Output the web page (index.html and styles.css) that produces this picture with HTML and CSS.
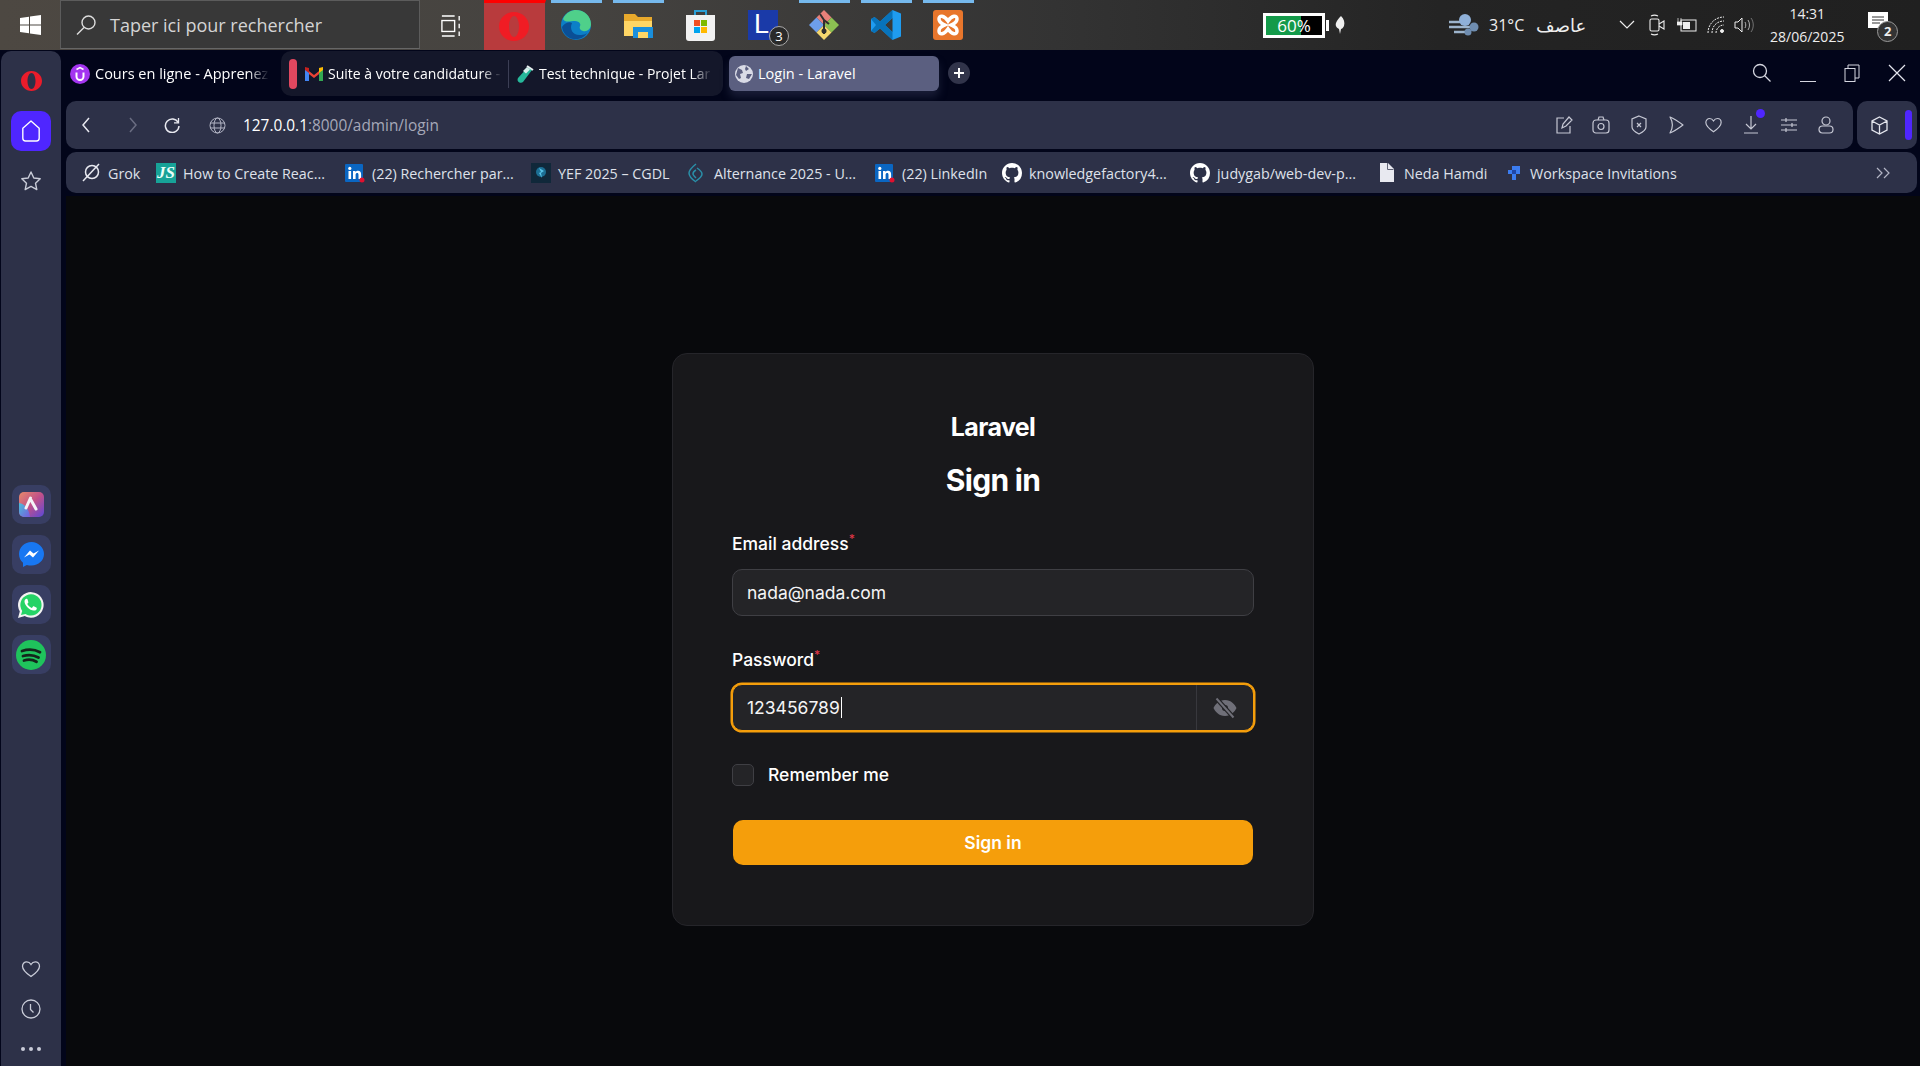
FILE: index.html
```html
<!DOCTYPE html>
<html lang="en">
  <head>
    <meta charset="UTF-8" />
    <meta name="viewport" content="width=device-width, initial-scale=1.0" />
    <title>Login - Laravel</title>
    <link rel="stylesheet" href="styles.css">
  </head>
  <body>
    <svg class="defs" width="0" height="0">
      <symbol id="github" viewBox="0 0 16 16"><path fill="#fff" d="M8 0C3.58 0 0 3.58 0 8c0 3.54 2.29 6.53 5.47 7.59.4.07.55-.17.55-.38 0-.19-.01-.82-.01-1.49-2.01.37-2.53-.49-2.69-.94-.09-.23-.48-.94-.82-1.13-.28-.15-.68-.52-.01-.53.63-.01 1.08.58 1.23.82.72 1.21 1.87.87 2.33.66.07-.52.28-.87.51-1.07-1.78-.2-3.64-.89-3.64-3.95 0-.87.31-1.59.82-2.15-.08-.2-.36-1.02.08-2.12 0 0 .67-.21 2.2.82.64-.18 1.32-.27 2-.27.68 0 1.36.09 2 .27 1.53-1.04 2.2-.82 2.2-.82.44 1.1.16 1.92.08 2.12.51.56.82 1.27.82 2.15 0 3.07-1.87 3.75-3.65 3.95.29.25.54.73.54 1.48 0 1.07-.01 1.93-.01 2.2 0 .21.15.46.55.38A8.013 8.013 0 0016 8c0-4.42-3.58-8-8-8z"/></symbol>
      <symbol id="linkedin" viewBox="0 0 20 20"><rect width="18" height="18" y="1" rx="1" fill="#0a66c2"/><rect x="3.5" y="8" width="2.6" height="8" fill="#fff"/><circle cx="4.8" cy="5.4" r="1.6" fill="#fff"/><path fill="#fff" d="M8 8h2.5v1.2c.6-.9 1.5-1.4 2.6-1.4 2 0 3 1.3 3 3.5V16h-2.6v-4.2c0-1.2-.4-1.8-1.3-1.8s-1.6.6-1.6 1.8V16H8z"/><circle cx="17" cy="17" r="2.5" fill="#e0102f"/></symbol>
      <symbol id="heart" viewBox="0 0 20 20"><path fill="none" stroke="currentColor" stroke-width="1.3" d="M10 17.5C5 14 1.5 11 1.5 7.2 1.500 4.500 3.500 2.800 5.700 2.800c1.800 0 3.300 1 4.300 2.700 1-1.700 2.500-2.700 4.300-2.700 2.200 0 4.200 1.700 4.200 4.400 0 3.800-3.500 6.800-8.500 10.300z"/></symbol>
    </svg>

    <header class="taskbar">
      <div class="start">
        <svg width="21" height="20" viewBox="0 0 21 20"><path fill="#fff" d="M0 3l9-1.300V9.500H0zM10 1.500L21 0v9.500H10zM0 10.500h9v7.800L0 17zM10 10.500h11V20l-11-1.500z"/></svg>
      </div>
      <div class="search">
        <svg width="22" height="22" viewBox="0 0 22 22"><circle cx="13.500" cy="8.500" r="6.500" fill="none" stroke="#ddd" stroke-width="1.400"/><path d="M9 13.500L2 20.500" stroke="#ddd" stroke-width="1.500"/></svg>
        <span>Taper ici pour rechercher</span>
      </div>
      <div class="taskview">
        <svg width="20" height="22" viewBox="0 0 22 24" fill="none" stroke="#fff" stroke-width="1.500"><path d="M1 1h14M1 23h14"/><rect x="1" y="6" width="14" height="12"/><path d="M20 1v5M20 9.500v5M20 18v5"/></svg>
      </div>
      <div class="apps">
        <div class="app app-hot">
          <svg width="30" height="29" viewBox="0 0 30 29"><path fill="#f01c24" fill-rule="evenodd" d="M15 0c8.300 0 15 6.500 15 14.500S23.300 29 15 29 0 22.500 0 14.500 6.700 0 15 0zm0 4c-2.800 0-5 4.500-5 10.500S12.200 25 15 25s5-4.500 5-10.500S17.800 4 15 4z"/></svg>
        </div>
        <div class="app app-open">
          <svg width="32" height="32" viewBox="0 0 32 32"><circle cx="16" cy="16" r="15" fill="#0c7fc7"/><path fill="#4fd08a" d="M3 10C6 3 12 1 16 1c8 0 15 6 15 14 0 5-4 8-8 7-3-.6-4-3-3-5 1-1 0-5-5-5-5 0-10 2-12-2z"/><path fill="#0a4f96" d="M12 14c-3 6 1 13 9 12 2 0 5-1 6-2-3 5-9 7-14 6C8 29 3 25 2 18c2-3 6-6 10-4z"/></svg>
        </div>
        <div class="app app-open">
          <svg width="30" height="26" viewBox="0 0 30 26"><path fill="#e8a92c" d="M1 2h11l3 3h14v19H1z"/><path fill="#ffd665" d="M1 9h28v15H1z"/><rect x="10" y="15" width="20" height="11" fill="#1a8fdc"/><rect x="15" y="20" width="10" height="6" fill="#ffd665"/></svg>
        </div>
        <div class="app">
          <svg width="29" height="32" viewBox="0 0 29 32"><path fill="none" stroke="#2a9fd6" stroke-width="2" d="M9 7V2h11v5"/><path fill="#f2f2f2" d="M0 6h29v23a3 3 0 01-3 3H3a3 3 0 01-3-3z"/><rect x="8" y="11" width="6" height="6" fill="#f25022"/><rect x="15" y="11" width="6" height="6" fill="#7fba00"/><rect x="8" y="18" width="6" height="6" fill="#00a4ef"/><rect x="15" y="18" width="6" height="6" fill="#ffb900"/></svg>
        </div>
        <div class="app">
          <div class="lapp"><span>L</span><b>3</b></div>
        </div>
        <div class="app app-open">
          <svg width="30" height="30" viewBox="0 0 30 30"><path fill="#e8807a" d="M15 0l7.500 7.500L15 15 7.500 7.500z"/><path fill="#6d9eeb" d="M7.500 7.500L15 15l-7.500 7.500L0 15z"/><path fill="#8cc152" d="M22.500 7.500L30 15l-7.500 7.500L15 15z"/><path fill="#f5d76e" d="M15 15l7.500 7.500L15 30l-7.500-7.500z"/><path d="M11 4l4 6v10M15 10l5 4M15 20v4" stroke="#2f2f2f" stroke-width="2" fill="none"/><circle cx="15" cy="21" r="2.500" fill="#2f2f2f"/></svg>
        </div>
        <div class="app app-open">
          <svg width="30" height="30" viewBox="0 0 30 30"><path fill="#1f9cf0" d="M21.500 0L30 3.500v23L21.500 30 9 18.500 3.500 23 0 21V9l3.500-2L9 11.500zm0 8L14 15l7.500 7z"/><path fill="#0065a9" d="M0 9l3.500-2L9 11.500 21.500 0v8L14 15l7.500 7v8L9 18.500 3.500 23 0 21l5-6z" opacity=".75"/></svg>
        </div>
        <div class="app app-open">
          <svg width="30" height="30" viewBox="0 0 30 30"><rect width="30" height="30" rx="3" fill="#e8762c"/><path fill="none" stroke="#fff" stroke-width="3.500" d="M6 9c0-4 5-4 9 2 4-6 9-6 9-2s-4 5-6 6c2 1 6 2 6 6s-5 4-9-2c-4 6-9 6-9 2s4-5 6-6c-2-1-6-2-6-6z"/></svg>
        </div>
      </div>
      <div class="tray">
        <div class="battery"><span>60%</span></div>
        <svg class="feather" width="10" height="18" viewBox="0 0 10 18"><path fill="#eee" d="M6 0c3 3 4 6 3 10-1 2-2 3-3 3l-1 5-1-5C2 12 0 10 1 7c1-3 3-5 5-7z"/></svg>
        <svg class="wind" width="30" height="22" viewBox="0 0 30 22"><path d="M0 8h18M0 13h22M5 18h14" stroke="#9db4cc" stroke-width="2.500"/><circle cx="16" cy="6" r="6" fill="#8fb0d8"/><circle cx="25" cy="13" r="4.500" fill="#6f8db0"/><circle cx="19" cy="18" r="3.500" fill="#6f8db0"/></svg>
        <span class="temp">31°C</span>
        <span class="weather" lang="ar" dir="rtl">عاصف</span>
        <svg class="chev" width="16" height="10" viewBox="0 0 16 10"><path d="M1 1l7 7 7-7" fill="none" stroke="#eee" stroke-width="1.200"/></svg>
        <svg class="meet" width="16" height="22" viewBox="0 0 16 22" fill="none" stroke="#eee" stroke-width="1.100"><rect x="1" y="5" width="9" height="12" rx="1.500"/><path d="M10 10l5-3v8l-5-3M2 2c2-1 5-1 7 0M2 20c2 1 5 1 7 0"/></svg>
        <svg class="plug" width="20" height="14" viewBox="0 0 20 14"><rect x="4" y="2" width="15" height="11" fill="none" stroke="#eee"/><rect x="6" y="4" width="7" height="7" fill="#eee"/><path d="M1 0v4M4 0v4M0 4h5v3H0z" fill="#eee" stroke="#eee" stroke-width=".7"/></svg>
        <svg class="wifi" width="18" height="18" viewBox="0 0 18 18" fill="none" stroke="#eee" stroke-width="1"><path d="M1 17C1 8 8 1 17 1M5 17c0-7 5-12 12-12M9 17c0-4 3-8 8-8" stroke-dasharray="2 1"/><circle cx="15" cy="15" r="1.500" fill="#eee"/></svg>
        <svg class="vol" width="20" height="18" viewBox="0 0 20 18" fill="none" stroke="#eee" stroke-width="1"><path d="M1 6h3l4-4v14l-4-4H1z"/><path d="M11 6c1 2 1 4 0 6M14 4c2 3 2 7 0 10" opacity=".7"/><path d="M17 2c3 4 3 10 0 14" opacity=".4"/></svg>
        <div class="clock"><span>14:31</span><span>28/06/2025</span></div>
        <div class="notif">
          <svg width="20" height="20" viewBox="0 0 20 20"><path fill="#fff" d="M0 0h20v16H0z"/><path d="M4 5h12M4 8h12M4 11h8" stroke="#333" stroke-width="1"/></svg>
          <b>2</b>
        </div>
      </div>
    </header>

    <div class="browser">
      <aside class="sidebar">
        <div class="side-top">
          <svg width="21" height="20" viewBox="0 0 21 20"><path fill="#ea1c2b" fill-rule="evenodd" d="M10.500 0C16.300 0 21 4.500 21 10s-4.700 10-10.500 10S0 15.500 0 10 4.700 0 10.500 0zm0 2C8.300 2 6.500 5.500 6.500 10s1.800 8 4 8 4-3.500 4-8-1.800-8-4-8z"/></svg>
          <div class="home">
            <svg width="20" height="24" viewBox="0 0 22 26"><path fill="none" stroke="#fff" stroke-width="1.500" d="M11 2L2 10v11c0 2 1 3 3 3h12c2 0 3-1 3-3V10z" stroke-linejoin="round"/></svg>
          </div>
          <svg class="star" width="22" height="22" viewBox="0 0 22 22"><path fill="none" stroke="#c9ccd8" stroke-width="1.400" stroke-linejoin="round" d="M11 2l2.800 6 6.400.8-4.700 4.400 1.300 6.400L11 16.400 5.200 19.600l1.300-6.400L1.800 8.800 8.200 8z"/></svg>
        </div>
        <div class="side-apps">
          <div class="side-app">
            <svg width="25" height="25" viewBox="0 0 25 25"><defs><linearGradient id="aria" x1="0" y1="0" x2="1" y2="1"><stop offset="0" stop-color="#e88a6a"/><stop offset=".5" stop-color="#c0508a"/><stop offset="1" stop-color="#5a48d8"/></linearGradient><linearGradient id="ariab" x1="0" y1="0" x2="1" y2="1"><stop offset="0" stop-color="#49c0d8"/><stop offset="1" stop-color="#7a5ae0"/></linearGradient></defs><rect width="25" height="25" rx="5" fill="url(#aria)"/><path d="M0 11c6 1 10 6 11 14H5a5 5 0 01-5-5z" fill="url(#ariab)"/><path d="M11.500 6L7 16M12 8l5 9" stroke="#f4f4f8" stroke-width="3" stroke-linecap="round"/></svg>
          </div>
          <div class="side-app">
            <svg width="25" height="25" viewBox="0 0 25 25"><path fill="#1877f2" d="M12.500 0C5.500 0 0 5.200 0 12c0 3.600 1.500 6.700 4 8.800V25l3.800-2.100c1.500.4 3 .6 4.700.6 7 0 12.500-5.200 12.500-11.500S19.500 0 12.500 0z"/><path fill="#fff" d="M5 15.500l6-7 3.500 3L20 8.500l-6 7-3.500-3z"/></svg>
          </div>
          <div class="side-app">
            <svg width="26" height="26" viewBox="0 0 26 26"><path fill="#f2f2f2" d="M0 26l1.800-6.600A12.800 12.800 0 1113 25.700c-2.200 0-4.300-.6-6.200-1.600z"/><path fill="#25d366" d="M3 23l1.200-4.100A10.600 10.600 0 1113 23.500c-1.900 0-3.800-.5-5.400-1.500z"/><path fill="#fff" d="M9.500 7.300c-.3-.6-.5-.6-1-.6-.8 0-2 .9-2 2.900 0 3.800 5.300 9 9.300 9 2 0 3-1.300 3-2.200 0-.5-.2-.7-.6-.9l-2.400-1.200c-.4-.2-.6 0-.8.300l-.9 1.100c-.3.300-.5.300-.9.100-1.500-.7-3-2-3.800-3.500-.2-.4 0-.6.200-.8l.6-.8c.2-.3.200-.5.100-.8z"/></svg>
          </div>
          <div class="side-app">
            <svg width="30" height="30" viewBox="0 0 30 30"><circle cx="15" cy="15" r="15" fill="#1fc35c"/><path d="M6 11c6-2 13-1.500 18 1.200M7 16c5-1.500 11-1 15.500 1.500M8 20.500c4-1.200 9-.8 12.500 1.200" fill="none" stroke="#14251c" stroke-width="2.800" stroke-linecap="round"/></svg>
          </div>
        </div>
        <div class="side-bottom">
          <svg class="line-icon" width="20" height="20"><use href="#heart"/></svg>
          <svg class="line-icon" width="20" height="20" viewBox="0 0 20 20" fill="none" stroke="currentColor" stroke-width="1.300"><circle cx="10" cy="10" r="9"/><path d="M9.500 5v5.500l3 3"/></svg>
          <div class="dots"><i></i><i></i><i></i></div>
        </div>
      </aside>

      <div class="main">
        <nav class="tabs">
          <div class="tab tab-first">
            <svg width="20" height="20" viewBox="0 0 20 20"><circle cx="10" cy="10" r="10" fill="#a435f0"/><path d="M6.500 8.500v4a3.500 3.500 0 007 0v-4" fill="none" stroke="#fff" stroke-width="2"/><path d="M6.500 5.500L10 3.500l3.500 2" fill="none" stroke="#fff" stroke-width="1.500"/></svg>
            <span class="tab-text">Cours en ligne - Apprenez</span>
          </div>
          <div class="tab-group">
            <i class="group-pill"></i>
            <div class="tab tab-mail">
              <svg width="18" height="15" viewBox="0 0 18 15"><path fill="#ea4335" d="M0 2l9 7 9-7v3L9 12 0 5z"/><path fill="#4285f4" d="M0 3v12h4V6z"/><path fill="#34a853" d="M18 3v12h-4V6z"/><path fill="#fbbc05" d="M14 2l4-1v3l-4 3z"/><path fill="#c5221f" d="M4 2L0 1v3l4 3z"/></svg>
              <span class="tab-text">Suite à votre candidature -</span>
            </div>
            <i class="group-sep"></i>
            <div class="tab tab-test">
              <svg width="18" height="20" viewBox="0 0 18 20"><path d="M2 14L12 3l4 3-9 12c-2 2-7 0-5-4z" fill="#26b89a"/><path d="M11 2l6 4" stroke="#e8eef0" stroke-width="2"/><path d="M7 7l4-4 3 2.500-4 4z" fill="#d8f0ec"/></svg>
              <span class="tab-text">Test technique - Projet Lar</span>
            </div>
          </div>
          <div class="tab tab-active">
            <svg width="18" height="18" viewBox="0 0 18 18"><circle cx="9" cy="9" r="9" fill="#d9dbe6"/><path d="M3 3l4 2 1 3-3 1 1 4-2 1-3-4zM11 1l3 3-3 2-1-2zM17 9l-3 5-3-1 1-4z" fill="#5b5f80"/></svg>
            <span>Login - Laravel</span>
          </div>
          <div class="tab-add"></div>
          <div class="win-controls">
            <svg width="20" height="20" viewBox="0 0 20 20" fill="none" stroke="#d5d7e0" stroke-width="1.300"><circle cx="8" cy="8" r="6.500"/><path d="M12.500 12.500l6 6"/></svg>
            <i class="win-min"></i>
            <svg width="16" height="18" viewBox="0 0 16 18" fill="none" stroke="#d5d7e0" stroke-width="1"><rect x="1" y="4.500" width="10" height="13"/><path d="M4 4.500V1h11v13h-4"/></svg>
            <svg width="18" height="18" viewBox="0 0 18 18" stroke="#e4e6ee" stroke-width="1.200"><path d="M1 1l16 16M17 1L1 17"/></svg>
          </div>
        </nav>

        <div class="toolbar">
          <div class="addressbar">
            <svg class="nav-back" width="10" height="16" viewBox="0 0 10 16"><path d="M8 1L2 8l6 7" fill="none" stroke="#e8e9f0" stroke-width="1.500"/></svg>
            <svg class="nav-fwd" width="10" height="16" viewBox="0 0 10 16"><path d="M2 1l6 7-6 7" fill="none" stroke="#6a6d82" stroke-width="1.500"/></svg>
            <svg class="nav-reload" width="16" height="16" viewBox="0 0 16 16" fill="none" stroke="#e8e9f0" stroke-width="1.500"><path d="M14.200 5.500A6.800 6.800 0 1015 9"/><path d="M14.500 1v4.800H10" stroke-width="1.300"/></svg>
            <svg class="nav-globe" width="17" height="17" viewBox="0 0 17 17" fill="none" stroke="#b4b6c6" stroke-width="1"><circle cx="8.500" cy="8.500" r="7.500"/><ellipse cx="8.500" cy="8.500" rx="3.500" ry="7.500"/><path d="M1 6h15M1 11h15"/></svg>
            <div class="url"><b>127.0.0.1</b>:8000/admin/login</div>
            <div class="tools">
              <svg width="18" height="20" viewBox="0 0 18 20" fill="none"><path d="M9 3H2v15h13v-7M7 13l1-4 6-7 3 3-6 6z"/></svg>
              <svg width="18" height="20" viewBox="0 0 18 20" fill="none"><rect x="1" y="5" width="16" height="13" rx="3"/><circle cx="9" cy="11.500" r="3"/><path d="M6 5l1-3h4l1 3"/></svg>
              <svg width="16" height="20" viewBox="0 0 16 20" fill="none"><path d="M8 1l7 3v8c0 3-3 5-7 7-4-2-7-4-7-7V4zM6 8l4 4M10 8l-4 4"/></svg>
              <svg width="16" height="18" viewBox="0 0 16 18" fill="none"><path d="M2 1c5 2 9 5 13 8-4 3-8 6-13 8 3-5 3-11 0-16z" stroke-linejoin="round"/></svg>
              <svg width="19" height="18" viewBox="0 0 20 20"><use href="#heart"/></svg>
              <div class="tool-dl">
                <svg width="16" height="20" viewBox="0 0 16 20" fill="none"><path d="M8 1v12M3 9l5 5 5-5M1 18h14"/></svg>
                <i></i>
              </div>
              <svg width="16" height="16" viewBox="0 0 16 16" fill="none"><path d="M0 3h16M0 8h16M0 13h16M5 1v4M11 6v4M5 11v4"/></svg>
              <svg width="16" height="20" viewBox="0 0 16 20" fill="none"><circle cx="8" cy="6" r="4"/><rect x="1" y="11" width="14" height="7" rx="3.500"/></svg>
            </div>
          </div>
          <div class="extbox">
            <svg width="17" height="19" viewBox="0 0 17 19" fill="none" stroke="#e4e6ee" stroke-width="1.300"><path d="M8.500 1L16 5v9l-7.500 4L1 14V5zM1 5l7.500 4L16 5M8.500 9v9"/></svg>
            <i></i>
          </div>
        </div>

        <div class="bookmarks">
          <div class="bm">
            <svg width="19" height="19" viewBox="0 0 19 19" fill="none" stroke="#e8e9f0" stroke-width="1.500"><circle cx="10" cy="9" r="6.500"/><path d="M1 18L17 1"/></svg>
            <span>Grok</span>
          </div>
          <div class="bm">
            <div class="bm-js">JS</div>
            <span>How to Create Reac...</span>
          </div>
          <div class="bm">
            <svg width="20" height="20"><use href="#linkedin"/></svg>
            <span>(22) Rechercher par...</span>
          </div>
          <div class="bm">
            <svg width="20" height="20" viewBox="0 0 20 20"><rect width="20" height="20" fill="#10283a"/><circle cx="10" cy="9" r="5" fill="#1c6f94"/><path d="M8 5l5 3-3 2 1 5-3-5 2-1z" fill="#58c4e8"/></svg>
            <span>YEF 2025 – CGDL</span>
          </div>
          <div class="bm bm-alt">
            <svg width="16" height="20" viewBox="0 0 16 20" fill="none" stroke="#2a8fa8" stroke-width="1.500"><path d="M8 1C3 5 1 8 1 10c0 3 4 7 7 9M9 5c3 2 5 4 5 6s-3 5-6 7M8 7c-2 1-3 3-3 4s2 3 3 4"/></svg>
            <span>Alternance 2025 - U...</span>
          </div>
          <div class="bm">
            <svg width="20" height="20"><use href="#linkedin"/></svg>
            <span>(22) LinkedIn</span>
          </div>
          <div class="bm">
            <svg width="20" height="20"><use href="#github"/></svg>
            <span>knowledgefactory4...</span>
          </div>
          <div class="bm">
            <svg width="20" height="20"><use href="#github"/></svg>
            <span>judygab/web-dev-p...</span>
          </div>
          <div class="bm bm-doc">
            <svg width="14" height="19" viewBox="0 0 14 19"><path fill="#e8e9f0" d="M0 0h8l6 6v13H0z"/><path fill="#2d3148" d="M8 0v6h6l-1 .7H7.300V0z"/></svg>
            <span>Neda Hamdi</span>
          </div>
          <div class="bm bm-work">
            <svg width="12" height="14" viewBox="0 0 12 14"><path fill="#3b7cf0" d="M4 0h8v8H8v6H4V8H0V4h4z"/><path fill="#1e46a8" d="M4 4h4v4H4z"/></svg>
            <span>Workspace Invitations</span>
          </div>
          <svg class="bm-more" width="14" height="12" viewBox="0 0 14 12" fill="none" stroke="#b4b6c6" stroke-width="1.200"><path d="M1 1l5 5-5 5M8 1l5 5-5 5"/></svg>
        </div>

        <main class="page">
          <section class="card">
            <div class="brand">Laravel</div>
            <h1 class="title">Sign in</h1>

            <label class="label label-first">Email address<sup>*</sup></label>
            <div class="field">
              <span class="field-text">nada@nada.com</span>
            </div>

            <label class="label">Password<sup>*</sup></label>
            <div class="field field-focus">
              <span class="field-text">123456789<i class="caret"></i></span>
              <div class="field-eye">
                <svg width="24" height="22" viewBox="0 0 24 22"><path fill="#6f6f78" fill-rule="evenodd" d="M12 3c6 0 10 4.500 11.500 8C22 14.500 18 19 12 19S2 14.500.5 11C2 7.500 6 3 12 3zm0 5a3 3 0 100 6 3 3 0 000-6z"/><path d="M3 1l18 20" stroke="#242427" stroke-width="4.500"/><path d="M3.500 1.500l17 19" stroke="#6f6f78" stroke-width="2"/></svg>
              </div>
            </div>

            <div class="remember">
              <i class="checkbox"></i>
              <span>Remember me</span>
            </div>

            <button class="submit">Sign in</button>
          </section>
        </main>
      </div>
    </div>
  </body>
</html>
```

FILE: styles.css
```css
* {
  box-sizing: border-box;
}
html,
body {
  margin: 0;
  height: 1066px;
  overflow: hidden;
}
body {
  background: #02051a;
  font-family: "Open Sans", "Noto Sans", sans-serif;
  color: #fff;
}
i {
  display: block;
}
.defs {
  position: absolute;
}

/* windows taskbar */
.taskbar {
  height: 50px;
  display: flex;
  align-items: center;
  background: linear-gradient(90deg, #4d4842 0, #454340 30%, #333 55%, #242424 75%, #202020 100%);
}
.start {
  width: 60px;
  display: flex;
  justify-content: center;
  padding-left: 1px;
}
.search {
  width: 360px;
  height: 49px;
  margin-top: -1px;
  display: flex;
  align-items: center;
  gap: 13px;
  padding-left: 14px;
  background: #383838;
  border: 1px solid #5c5c5c;
  border-bottom-color: #666;
  font-size: 18px;
  color: #d4d4d4;
}
.taskview {
  width: 62px;
  display: flex;
  justify-content: center;
  padding-top: 2px;
  margin-right: 2px;
}
.apps {
  display: flex;
  height: 50px;
}
.app {
  position: relative;
  width: 62px;
  display: flex;
  align-items: center;
  justify-content: center;
}
.app svg {
  position: relative;
  left: -1px;
}
.app-open::before {
  content: "";
  position: absolute;
  top: 0;
  left: 5px;
  right: 6px;
  height: 3px;
  background: #76b9ed;
}
.app-hot {
  width: 62px;
  background: #b83b3d;
  border-top: 3px solid #f00;
  border-right: 1px solid transparent;
  background-clip: padding-box;
}
.lapp {
  position: relative;
  width: 30px;
  height: 30px;
  background: #1a3aa8;
  padding-left: 6px;
  font-size: 27px;
  line-height: 29px;
  font-family: "Liberation Sans", sans-serif;
}
.lapp b {
  position: absolute;
  right: -11px;
  bottom: -6px;
  width: 20px;
  height: 20px;
  border-radius: 50%;
  background: #2a2a2a;
  border: 1px solid #aaa;
  font-size: 13px;
  line-height: 18px;
  font-weight: 400;
  text-align: center;
  font-family: "Open Sans", sans-serif;
}
.tray {
  margin-left: auto;
  display: flex;
  align-items: center;
  height: 50px;
  width: 657px;
  color: #eee;
  font-size: 16px;
}
.battery {
  position: relative;
  width: 62px;
  height: 25px;
  border: 3px solid #fff;
  background: linear-gradient(90deg, #149a4a 0, #149a4a 62%, #000 62%);
  text-align: center;
  font-size: 17px;
  line-height: 19px;
  color: #fff;
}
.battery::after {
  content: "";
  position: absolute;
  right: -7px;
  top: 4px;
  width: 3px;
  height: 11px;
  background: #fff;
}
.feather {
  margin-left: 10px;
}
.wind {
  margin-left: 104px;
}
.temp {
  margin-left: 10px;
}
.weather {
  margin-left: 12px;
  width: 50px;
  font-family: "DejaVu Sans", sans-serif;
  font-size: 18px;
  text-align: center;
}
.chev {
  margin-left: 33px;
}
.meet {
  margin-left: 14px;
}
.plug {
  margin-left: 12px;
}
.wifi {
  margin-left: 10px;
}
.vol {
  margin-left: 9px;
}
.clock {
  width: 100px;
  margin-left: 3px;
  display: flex;
  flex-direction: column;
  align-items: center;
  font-size: 14px;
  line-height: 23px;
}
.notif {
  position: relative;
  margin-left: 11px;
  margin-top: -6px;
}
.notif svg {
  display: block;
}
.notif b {
  position: absolute;
  left: 9px;
  top: 9px;
  width: 21px;
  height: 21px;
  border-radius: 50%;
  background: #333;
  border: 1px solid #999;
  font-size: 13px;
  line-height: 19px;
  text-align: center;
}

/* browser frame */
.browser {
  display: flex;
  height: 1016px;
}
.sidebar {
  width: 60px;
  margin-top: 1px;
  margin-left: 1px;
  display: flex;
  flex-direction: column;
  align-items: center;
  background: #2d3148;
  border-radius: 10px 10px 0 0;
}
.side-top {
  display: flex;
  flex-direction: column;
  align-items: center;
  padding-top: 20px;
}
.home {
  width: 40px;
  height: 40px;
  margin-top: 20px;
  display: flex;
  align-items: center;
  justify-content: center;
  background: #4f26ff;
  border-radius: 10px;
}
.star {
  margin-top: 19px;
}
.side-apps {
  margin-top: 293px;
  display: flex;
  flex-direction: column;
  gap: 11px;
}
.side-app {
  width: 39px;
  height: 39px;
  display: flex;
  align-items: center;
  justify-content: center;
  background: #383e63;
  border-radius: 10px;
}
.side-bottom {
  margin-top: auto;
  padding-bottom: 7px;
  display: flex;
  flex-direction: column;
  align-items: center;
  gap: 20px;
  color: #c9ccd8;
}
.line-icon {
  display: block;
}
.dots {
  display: flex;
  gap: 4px;
  height: 20px;
  align-items: center;
}
.dots i {
  width: 4px;
  height: 4px;
  border-radius: 50%;
  background: #c9ccd8;
}

.main {
  flex: 1;
  min-width: 0;
  display: flex;
  flex-direction: column;
}

/* tabs */
.tabs {
  height: 51px;
  display: flex;
  align-items: flex-start;
  padding-left: 9px;
  font-size: 14.5px;
  line-height: 20px;
}
.tab {
  display: flex;
  align-items: center;
  gap: 5px;
  height: 35px;
  margin-top: 6px;
  white-space: nowrap;
  overflow: hidden;
}
.tab-text {
  display: block;
  overflow: hidden;
  flex: 1;
  -webkit-mask-image: linear-gradient(90deg, #000 88%, transparent);
  mask-image: linear-gradient(90deg, #000 88%, transparent);
}
.tab-first {
  width: 199px;
  margin-right: 12px;
}
.tab-group {
  width: 442px;
  height: 45px;
  margin-top: 1px;
  display: flex;
  align-items: center;
  background: #14172a;
  border-radius: 10px;
  padding-left: 8px;
  font-size: 14px;
}
.group-pill {
  width: 8px;
  height: 30px;
  border-radius: 4px;
  background: #e0475f;
  margin-right: 8px;
}
.tab-mail {
  width: 197px;
  margin-top: 0;
}
.group-sep {
  width: 1px;
  height: 28px;
  background: #3c3f55;
  margin: 0 7px 0 6px;
}
.tab-test {
  width: 196px;
  margin-top: 0;
}
.tab-active {
  width: 210px;
  margin-left: 6px;
  padding-left: 6px;
  background: #5b5f80;
  border-radius: 6px;
  box-shadow: 0 6px 8px rgba(70, 74, 110, 0.35);
}
.tab-add {
  position: relative;
  width: 22px;
  height: 22px;
  margin: 12px 0 0 9px;
  border-radius: 50%;
  background: #31344a;
}
.tab-add::before,
.tab-add::after {
  content: "";
  position: absolute;
  background: #fff;
  left: 6px;
  top: 10px;
  width: 10px;
  height: 2px;
}
.tab-add::after {
  left: 10px;
  top: 6px;
  width: 2px;
  height: 10px;
}
.win-controls {
  margin-left: auto;
  height: 46px;
  display: flex;
  align-items: center;
  gap: 28px;
  padding-right: 14px;
}
.win-min {
  width: 16px;
  height: 1px;
  margin-top: 16px;
  background: #d5d7e0;
}

/* address bar */
.toolbar {
  display: flex;
  gap: 4px;
  margin-left: 5px;
  height: 48px;
  margin-right: 3px;
}
.addressbar {
  flex: 1;
  display: flex;
  align-items: center;
  background: #2d3148;
  border-radius: 10px;
  padding-left: 15px;
}
.nav-fwd {
  margin-left: 37px;
}
.nav-reload {
  margin-left: 26px;
}
.nav-globe {
  margin-left: 29px;
}
.url {
  margin-left: 17px;
  font-size: 15.4px;
  color: #a6a8b8;
}
.url b {
  font-weight: 400;
  color: #fff;
}
.tools {
  margin-left: auto;
  padding-right: 8px;
  display: grid;
  grid-auto-flow: column;
  grid-auto-columns: 37.5px;
  justify-items: center;
  align-items: center;
  color: #c6c8d4;
}
.tools svg {
  display: block;
  stroke: #c6c8d4;
  stroke-width: 1.2;
}
.tool-dl {
  position: relative;
}
.tool-dl i {
  position: absolute;
  right: -6px;
  top: -6px;
  width: 9px;
  height: 9px;
  border-radius: 50%;
  background: #4f26ff;
}
.extbox {
  width: 60px;
  display: flex;
  align-items: center;
  gap: 17px;
  padding-left: 14px;
  background: #2d3148;
  border-radius: 10px;
}
.extbox i {
  width: 7px;
  height: 30px;
  border-radius: 4px;
  background: #4f26ff;
}

/* bookmarks */
.bookmarks {
  position: relative;
  height: 41px;
  margin: 3px 3px 0 5px;
  padding-left: 16px;
  display: grid;
  grid-template-columns: 74px 189px 186px 157px 187px 127px 188px 190px 128px 1fr;
  align-items: center;
  background: #2d3148;
  border-radius: 10px;
  font-size: 14.3px;
  color: #dfe1ea;
}
.bm {
  display: flex;
  align-items: center;
  gap: 7px;
  white-space: nowrap;
}
.bm span {
  margin-top: 2px;
}
.bm-alt,
.bm-doc,
.bm-work {
  gap: 10px;
}
.bm-js {
  width: 20px;
  height: 20px;
  background: #17a398;
  color: #eafff8;
  font-family: "Liberation Serif", serif;
  font-size: 17px;
  font-weight: 700;
  line-height: 20px;
  text-align: center;
  font-style: italic;
}
.bm-more {
  position: absolute;
  right: 27px;
  top: 15px;
}

/* login page */
.page {
  flex: 1;
  margin: 3px 0 0 5px;
  padding-top: 157px;
  display: flex;
  justify-content: center;
  align-items: flex-start;
  background: #08090c;
  font-family: Inter, "Liberation Sans", sans-serif;
}
.card {
  width: 642px;
  padding: 58px 59px 60px;
  background: #18181b;
  border: 1px solid #25252a;
  border-radius: 15px;
  display: flex;
  flex-direction: column;
}
.brand {
  font-size: 25px;
  line-height: 30px;
  font-weight: 700;
  letter-spacing: -0.6px;
  text-align: center;
}
.title {
  margin: 20px 0 0;
  font-size: 30px;
  line-height: 36px;
  font-weight: 700;
  letter-spacing: -0.7px;
  text-align: center;
}
.label {
  margin-top: 32px;
  margin-bottom: 12px;
  font-size: 17.5px;
  line-height: 24px;
  font-weight: 500;
  color: #fff;
}
.label-first {
  margin-top: 34px;
  margin-bottom: 13px;
}
.label sup {
  color: #dc3545;
  font-size: 12px;
  line-height: 0;
  font-weight: 500;
  vertical-align: 7px;
}
.field {
  height: 47px;
  display: flex;
  background: #242427;
  border: 1px solid #3f3f44;
  border-radius: 10px;
  font-size: 17.5px;
}
.field-text {
  flex: 1;
  padding: 0 14px;
  line-height: 45px;
  color: #f4f4f5;
}
.field-focus {
  border-color: #f59e0b;
  box-shadow: 0 0 0 1.500px #f59e0b;
}
.caret {
  display: inline-block;
  width: 1px;
  height: 21px;
  background: #fff;
  margin-left: 1px;
  vertical-align: -4px;
}
.field-eye {
  width: 57px;
  border-left: 1px solid #38383d;
  display: flex;
  align-items: center;
  justify-content: center;
}
.remember {
  margin-top: 33px;
  display: flex;
  align-items: center;
  gap: 14px;
  font-size: 17.5px;
  line-height: 22px;
  font-weight: 500;
}
.checkbox {
  width: 22px;
  height: 22px;
  background: #242427;
  border: 1px solid #3f3f44;
  border-radius: 5px;
}
.submit {
  margin: 34px 1px 0;
  height: 45px;
  border: 0;
  border-radius: 10px;
  background: #f59e0b;
  color: #fff;
  font-family: inherit;
  font-size: 17.5px;
  font-weight: 600;
}
```
